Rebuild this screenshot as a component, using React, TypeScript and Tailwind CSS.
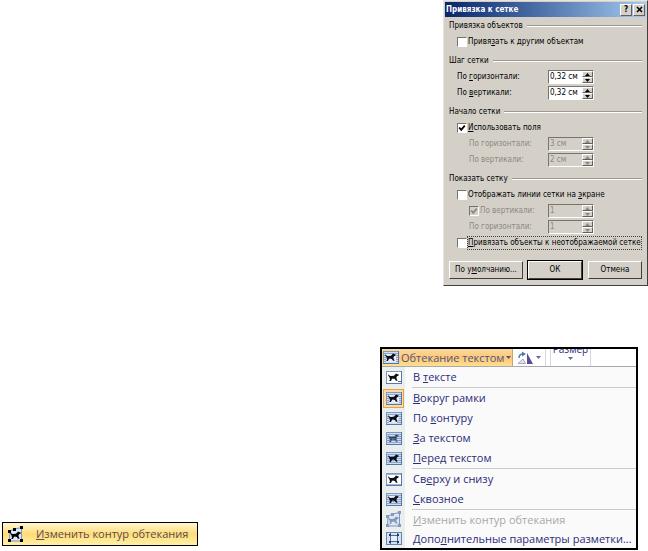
import React from 'react';

type WrapKind =
  | 'inline'
  | 'square'
  | 'tight'
  | 'behind'
  | 'front'
  | 'topBottom'
  | 'through'
  | 'points'
  | 'layout';

// Text with one underlined access key
const Hot = ({ text, at }: { text: string; at?: number }) => {
  if (at === undefined) return <>{text}</>;
  return (
    <>
      {text.slice(0, at)}
      <u className="underline-offset-1">{text[at]}</u>
      {text.slice(at + 1)}
    </>
  );
};

const DOG =
  'M2.5 3.2 L3.8 4.8 L4.8 5 L8 4.8 L10 2.6 L11 3 L12.8 3.6 L12.4 4.8 L11 5.2 L10.4 6.8 L10.8 8 L11.6 9.8 L10 9.8 L8.8 7.9 L6.6 7.4 L5.6 8.6 L5 9.9 L3.2 9.9 L4 8.4 L3.4 6.2 L2.2 4.6 Z';

const WrapIcon = ({ kind }: { kind: WrapKind }) => {
  if (kind === 'points') {
    return (
      <svg width="17" height="17" viewBox="0 0 17 17" aria-hidden="true">
        <path d="M3 5 L8 3 L14.500 1.500 V15 H2.500 Z" fill="#dce8f8" stroke="#7b96c2" strokeWidth="1" />
        <path d={DOG} transform="translate(1 3)" fill="currentColor" />
        <path
          d="M1 4h3v3H1z M6 2h3v3H6z M13 0h3v3h-3z M1 13h3v3H1z M13 13h3v3h-3z"
          fill="currentColor"
        />
      </svg>
    );
  }
  if (kind === 'layout') {
    return (
      <svg width="16" height="13" viewBox="0 0 16 13" aria-hidden="true">
        <rect x="0.500" y="0.500" width="15" height="12" fill="#d3e2f5" stroke="#6682ad" />
        <path d="M4.500 1v11 M11.500 1v11 M3 3.500h10 M3 9.500h10" stroke="#4f6896" fill="none" />
        <rect x="5" y="4" width="6" height="5" fill="#e8f0fa" />
        <path d="M3 2h2v2H3z M11 2h2v2h-2z M3 9h2v2H3z M11 9h2v2h-2z" fill="#26396b" />
      </svg>
    );
  }
  const plain = kind === 'inline' || kind === 'topBottom';
  return (
    <svg width="16" height="13" viewBox="0 0 16 13" aria-hidden="true">
      <rect x="0.500" y="0.500" width="15" height="12" fill={plain ? '#fff' : '#cfdff3'} stroke="#8098bd" />
      {kind === 'inline' && <path d="M12 10.500h3" stroke="#4d689b" />}
      {kind === 'topBottom' && <path d="M1 1.500h14 M1 11.500h14" stroke="#9eb5d8" />}
      {!plain && <path d="M1 2.500h14 M1 4.500h14 M1 6.500h14 M1 8.500h14 M1 10.500h14" stroke="#8ca6cd" />}
      {kind === 'square' && <rect x="3" y="3" width="10" height="8" fill="#e6eef9" />}
      {kind === 'tight' && <path d="M3 3h3l2 2 2-2h3v3l-2 5H3z" fill="#e2ebf8" />}
      {kind === 'through' && <path d="M3 3h10v3H3z" fill="#e4edf9" />}
      <path d={DOG} fill={kind === 'behind' ? '#34405a' : '#0b0f18'} />
      {kind === 'behind' && <path d="M1 4.500h14 M1 6.500h14 M1 8.500h14" stroke="#7089b5" opacity="0.5" />}
      <path d="M0 12.500h16 M15.500 0v13" stroke="#5c76a4" />
    </svg>
  );
};

const Arrow = ({ down = false }: { down?: boolean }) => (
  <svg width="5" height="3" viewBox="0 0 5 3" className="shrink-0" aria-hidden="true">
    <path d={down ? 'M0 0h5L2.500 3z' : 'M0 3h5L2.500 0z'} fill="currentColor" />
  </svg>
);

/* ---------- Grid dialog ---------- */

const raised = 'border border-t-white border-l-white border-r-[#606060] border-b-[#606060] bg-[#d4d0c8]';

const Section = ({ title, children }: { title: string; children: React.ReactNode }) => (
  <fieldset className="min-w-0">
    <div className="flex h-4 items-center gap-1">
      <span>{title}</span>
      <span className="h-[2px] flex-1 border-t border-[#9c9890] border-b border-b-white" />
    </div>
    {children}
  </fieldset>
);

interface CheckProps {
  label: string;
  at?: number;
  checked?: boolean;
  disabled?: boolean;
  focused?: boolean;
}

const Check = ({ label, at, checked = false, disabled = false, focused = false }: CheckProps) => (
  <label className={`flex h-4 items-center ${disabled ? 'text-[#8c8880]' : ''}`}>
    <span className="relative flex">
      <input
        type="checkbox"
        defaultChecked={checked}
        disabled={disabled}
        className={`peer size-[10px] appearance-none border border-t-[#77746d] border-l-[#77746d] border-r-white border-b-white ${disabled ? 'bg-[#d4d0c8]' : 'bg-white'}`}
      />
      <svg
        viewBox="0 0 10 10"
        className="pointer-events-none absolute inset-0 hidden size-[10px] peer-checked:block"
        aria-hidden="true"
      >
        <path d="M2.200 4.500 L4.200 6.800 L7.800 2.600" fill="none" stroke="currentColor" strokeWidth="1.800" />
      </svg>
    </span>
    <span className={`border leading-3 ${focused ? 'border-dotted border-[#404040]' : 'border-transparent'}`}>
      <Hot text={label} at={at} />
    </span>
  </label>
);

const Spin = ({ id, value, disabled = false }: { id: string; value: string; disabled?: boolean }) => (
  <span
    className={`flex h-[14px] w-[46px] border border-t-[#77746d] border-l-[#77746d] border-r-white border-b-white ${disabled ? 'bg-[#d4d0c8] text-[#8c8880]' : 'bg-white text-black'}`}
  >
    <input id={id} type="text" defaultValue={value} disabled={disabled} className="w-0 min-w-0 flex-1 pl-px leading-3" />
    <span className="flex w-[11px] flex-col">
      <button type="button" disabled={disabled} aria-label="+" className={`flex h-[6px] items-center justify-center ${raised}`}>
        <Arrow />
      </button>
      <button type="button" disabled={disabled} aria-label="−" className={`flex h-[6px] items-center justify-center ${raised}`}>
        <Arrow down />
      </button>
    </span>
  </span>
);

interface FieldProps {
  id: string;
  label: string;
  at?: number;
  value: string;
  disabled?: boolean;
  nested?: boolean;
}

const Field = ({ id, label, at, value, disabled, nested }: FieldProps) => (
  <div className={`flex h-4 items-center justify-between pr-12 ${nested ? 'pl-5' : 'pl-2'}`}>
    <label htmlFor={id} className={disabled ? 'text-[#8c8880]' : ''}>
      <Hot text={label} at={at} />
    </label>
    <Spin id={id} value={value} disabled={disabled} />
  </div>
);

const dialogButton =
  'h-[18px] border border-t-white border-l-white border-r-[#404040] border-b-[#404040] bg-[#d4d0c8] leading-3';

const GridDialog = () => (
  <form
    onSubmit={e => e.preventDefault()}
    className="w-[205px] border border-t-[#e8e5de] border-l-[#e8e5de] border-r-[#404040] border-b-[#404040] bg-[#d4d0c8] p-px font-['DejaVu_Sans_Condensed','DejaVu_Sans',sans-serif] text-[8px] leading-3 text-black"
  >
    <header className="flex h-[15px] items-center justify-between bg-linear-to-r from-[#0a246a] to-[#a6caf0] px-px text-white">
      <h2 className="font-bold">Привязка к сетке</h2>
      <div className="flex gap-px text-black">
        <button type="button" className={`flex h-3 w-3 items-center justify-center font-bold ${raised}`}>?</button>
        <button type="button" aria-label="Закрыть" className={`flex h-3 w-3 items-center justify-center ${raised}`}>
          <svg width="7" height="7" viewBox="0 0 7 7" aria-hidden="true">
            <path d="M1 1l5 5M6 1L1 6" stroke="#000" strokeWidth="1.500" />
          </svg>
        </button>
      </div>
    </header>

    <div className="flex flex-col gap-[3px] pt-px pr-1 pl-1">
      <Section title="Привязка объектов">
        <div className="pl-2">
          <Check label="Привязать к другим объектам" at={5} />
        </div>
      </Section>

      <Section title="Шаг сетки">
        <Field id="step-h" label="По горизонтали:" at={3} value="0,32 см" />
        <Field id="step-v" label="По вертикали:" at={3} value="0,32 см" />
      </Section>

      <Section title="Начало сетки">
        <div className="pl-2">
          <Check label="Использовать поля" at={0} checked />
        </div>
        <Field id="origin-h" label="По горизонтали:" value="3 см" disabled nested />
        <Field id="origin-v" label="По вертикали:" value="2 см" disabled nested />
      </Section>

      <Section title="Показать сетку">
        <div className="pl-2">
          <Check label="Отображать линии сетки на экране" at={26} />
        </div>
        <div className="flex h-4 items-center justify-between pr-12 pl-5">
          <Check label="По вертикали:" checked disabled />
          <Spin id="show-v" value="1" disabled />
        </div>
        <Field id="show-h" label="По горизонтали:" value="1" disabled nested />
        <div className="pl-2 whitespace-nowrap">
          <Check label="Привязать объекты к неотображаемой сетке" at={0} focused />
        </div>
      </Section>
    </div>

    <footer className="flex justify-between px-1 pt-[10px] pb-[5px]">
      <button type="button" className={`w-[74px] ${dialogButton}`}>
        <Hot text="По умолчанию..." at={4} />
      </button>
      <div className="flex gap-[6px]">
        <button type="submit" className={`w-[54px] outline outline-black ${dialogButton}`}>ОК</button>
        <button type="button" className={`w-[54px] ${dialogButton}`}>Отмена</button>
      </div>
    </footer>
  </form>
);

/* ---------- Text wrapping menu ---------- */

interface Item {
  label: string;
  at: number;
  icon: WrapKind;
  active?: boolean;
  disabled?: boolean;
}

const groups: Item[][] = [
  [{ label: 'В тексте', at: 2, icon: 'inline' }],
  [
    { label: 'Вокруг рамки', at: 0, icon: 'square', active: true },
    { label: 'По контуру', at: 3, icon: 'tight' },
    { label: 'За текстом', at: 0, icon: 'behind' },
    { label: 'Перед текстом', at: 0, icon: 'front' },
  ],
  [
    { label: 'Сверху и снизу', at: 2, icon: 'topBottom' },
    { label: 'Сквозное', at: 0, icon: 'through' },
  ],
  [
    { label: 'Изменить контур обтекания', at: 0, icon: 'points', disabled: true },
    { label: 'Дополнительные параметры разметки...', at: 4, icon: 'layout' },
  ],
];

const WrapMenu = () => (
  <div className="w-[258px] border-2 border-black bg-[#fafafa] text-[#2b2b78]">
    <div className="flex h-[18px] overflow-hidden border-b border-[#a9a9ad] bg-white">
      <button
        type="button"
        className="flex w-[131px] items-center gap-[2px] border-r border-[#c8a868] bg-linear-to-b from-[#fbd9a2] via-[#fcc873] to-[#fde08e] pl-px text-[#56508a]"
      >
        <WrapIcon kind="square" />
        <span className="whitespace-nowrap">Обтекание текстом</span>
        <Arrow down />
      </button>
      <button type="button" aria-label="Повернуть" className="flex w-[33px] items-center gap-[2px] border-r border-[#d4d8e2] pl-1 text-[#5b6aa0]">
        <svg width="17" height="14" viewBox="0 0 17 14" aria-hidden="true">
          <path d="M1 12.500h7.500L6 8z" fill="#e3e6ec" stroke="#a2a8b4" />
          <path d="M2 7 Q2 3 6 3" fill="none" stroke="#4a7cb8" strokeWidth="1.500" />
          <path d="M5 0.500 L9 3 L5 5.500z" fill="#4a7cb8" />
          <path d="M10 2 V13 H16z" fill="#5a4a9c" />
        </svg>
        <Arrow down />
      </button>
      <button
        type="button"
        className="ml-1 flex w-[41px] flex-col items-center justify-start border-x border-[#d4d8e2] text-[#5b6aa0]"
      >
        <span className="-mt-[6px] mb-[2px] text-[10px] leading-3 text-[#2b2b78]">Размер</span>
        <Arrow down />
      </button>
    </div>

    <div role="menu" className="bg-linear-to-r from-[#e9eeee] from-[23px] to-[#fafafa] to-[23px]">
      {groups.map((group, g) => (
        <div key={g} role="group">
          {g > 0 && <div role="separator" className="ml-[30px] h-px bg-[#c9cacc]" />}
          {group.map(item => (
            <button
              key={item.label}
              type="button"
              role="menuitem"
              disabled={item.disabled}
              className={`flex w-full items-center gap-[9px] pl-px text-left disabled:text-[#a8a8ac] ${g === groups.length - 1 ? 'h-[19px]' : 'h-5'}`}
            >
              <span
                className={`flex h-[19px] w-[21px] shrink-0 items-center justify-center ${item.active ? 'border border-[#e8a04c] bg-[#fcdca0]' : ''} ${item.disabled ? 'text-[#8a98b8]' : ''}`}
              >
                <WrapIcon kind={item.icon} />
              </span>
              <span className="whitespace-nowrap">
                <Hot text={item.label} at={item.at} />
              </span>
            </button>
          ))}
        </div>
      ))}
    </div>
  </div>
);

const App: React.FC = () => (
  <main className="bg-white">
    <div className="flex justify-end">
      <GridDialog />
    </div>
    <div className="mt-[61px] flex items-end justify-between pr-[10px] pl-[2px] font-['Open_Sans','Noto_Sans',sans-serif] text-[11px] leading-4 font-medium">
      <button
        type="button"
        className="mb-1 flex h-6 w-[196px] items-center gap-3 border border-black bg-linear-to-b from-[#fff6cf] via-[#ffdc74] to-[#fff0a8] pl-1 text-[#5c4a52]"
      >
        <span className="text-black">
          <WrapIcon kind="points" />
        </span>
        <span className="whitespace-nowrap">
          <Hot text="Изменить контур обтекания" at={0} />
        </span>
      </button>
      <WrapMenu />
    </div>
  </main>
);

export default App;
